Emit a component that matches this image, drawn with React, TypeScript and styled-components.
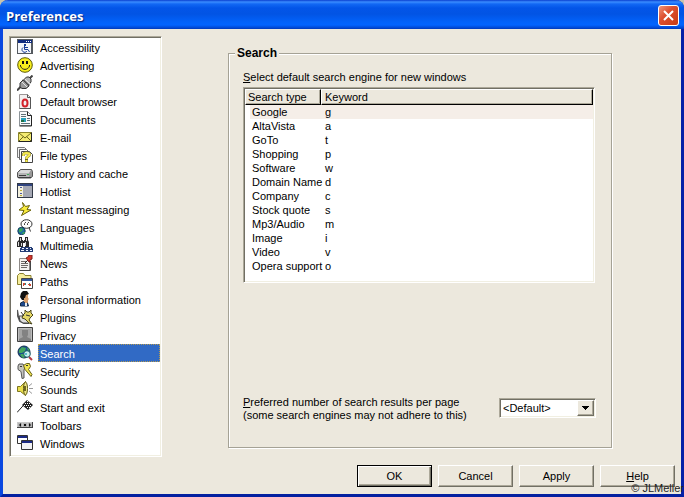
import React, { useState } from "react";
import styled, { createGlobalStyle, css } from "styled-components";

const surface = "#ece8dd";
const shade = "#aca899";
const dark = "#716f64";

const GlobalStyle = createGlobalStyle`
  *, *::before, *::after { box-sizing: border-box; }
  body {
    margin: 0;
    background: #c9c4ae;
    color: #000;
    font: 11px/14px "Liberation Sans", Arial, sans-serif;
  }
  button, select { font: inherit; color: inherit; }
`;

const Dialog = styled.div`
  position: relative;
  display: flex;
  flex-direction: column;
  min-height: 100vh;
  border: solid;
  border-width: 0 3px 3px;
  border-color: #0a2ec4 #0520a8 #0420a0 #0a48e0;
  border-radius: 8px 8px 0 0;
  background: ${surface};
`;

const TitleBar = styled.header`
  display: flex;
  align-items: center;
  justify-content: space-between;
  height: 29px;
  margin: 0 -3px;
  padding: 2px 5px 0 6px;
  border-radius: 8px 8px 0 0;
  background: linear-gradient(
    #0a3fd0 0px, #3a8cff 2px, #1268f4 4px, #0355e8 8px, #0254e4 14px,
    #0262fa 22px, #0264ff 25px, #0146d0 28px, #0038b8 29px
  );
`;

const Title = styled.h1`
  margin: 0;
  color: #fff;
  font: bold 13px/16px "Open Sans", "Noto Sans", sans-serif;
  text-shadow: 1px 1px 1px #06257f;
`;

const CloseButton = styled.button`
  display: grid;
  place-items: center;
  width: 21px;
  height: 21px;
  padding: 0;
  border: 1px solid #fff;
  border-radius: 3px;
  background: linear-gradient(135deg, #f0957a, #dd5030 40%, #c83a12);
`;

const Body = styled.div`
  display: grid;
  grid-template-columns: 153px minmax(0, 1fr);
  gap: 66px;
  flex: 1;
  padding: 7px 69px 8px 6px;
`;

const sunken = css`
  border: 1px solid;
  border-color: ${shade} #fff #fff ${shade};
  background: #fff;
  box-shadow: inset 1px 1px ${dark}, inset -1px -1px #f1efe2;
`;

const CategoryList = styled.ul`
  ${sunken}
  align-self: stretch;
  margin: 0;
  padding: 1px;
  list-style: none;
`;

const Category = styled.button<{ $active: boolean }>`
  display: grid;
  grid-template-columns: 16px minmax(0, 1fr);
  align-items: center;
  gap: 5px;
  width: 100%;
  height: 18px;
  padding: 0 0 0 6px;
  border: 0;
  background: none;
  text-align: left;
  white-space: nowrap;

  span {
    height: 18px;
    padding: 2px 0 0 2px;
    line-height: 16px;
    ${({ $active }) => $active && css`
      background: #316ac5;
      color: #fff;
      outline: 1px dotted #b59a50;
      outline-offset: -1px;
    `}
  }
`;

const Icon = styled.svg`
  display: block;
  width: 16px;
  height: 16px;
`;

const Group = styled.fieldset`
  display: flex;
  flex-direction: column;
  min-width: 0;
  margin: 10px 0 9px;
  padding: 10px 16px 25px 14px;
  border: 1px solid #a5a295;
  box-shadow: 1px 1px #fff, inset 1px 1px #fff;
`;

const Legend = styled.legend`
  margin-left: -8px;
  padding: 0 2px;
  background: ${surface};
  font: bold 12px/14px "Liberation Sans", Arial, sans-serif;
`;

const Caption = styled.div`
  margin-bottom: 3px;
  white-space: nowrap;
`;

const EngineBox = styled.div`
  ${sunken}
  height: 196px;
  padding: 1px;
`;

const EngineTable = styled.table`
  width: 100%;
  table-layout: fixed;
  border-collapse: separate;
  border-spacing: 0;
  white-space: nowrap;

  thead th {
    height: 16px;
    padding: 0 3px;
    border: 1px solid;
    border-color: #fff #000 #000 #fff;
    background: ${surface};
    box-shadow: inset -1px -1px ${shade};
    font-weight: normal;
    line-height: 14px;
    text-align: left;
  }
  thead th:first-child { width: 76px; padding-left: 2px; }
`;

const EngineRow = styled.tr<{ $selected: boolean }>`
  td {
    height: 14px;
    padding: 0 4px;
    line-height: 14px;
    ${({ $selected }) => $selected && css`background: #f5eee8;`}
  }
  td:first-child {
    padding: 0 0 0 7px;
    ${({ $selected }) => $selected && css`background: linear-gradient(90deg, #fff 5px, #f5eee8 5px);`}
  }
`;

const ResultsRow = styled.div`
  display: flex;
  align-items: flex-start;
  justify-content: space-between;
  margin: auto -1px 0 0;
`;

const ResultsLabel = styled.label`
  line-height: 13px;
  white-space: nowrap;
`;

const SelectBox = styled.div`
  ${sunken}
  display: grid;
  grid-template-columns: minmax(0, 1fr) 17px;
  width: 97px;
  height: 20px;
  margin-top: 2px;
  padding: 1px;

  select {
    grid-area: 1 / 1 / 2 / 3;
    appearance: none;
    width: 100%;
    height: 16px;
    padding: 0 18px 0 2px;
    border: 0;
    background: transparent;
    line-height: 16px;
  }
`;

const Arrow = styled.span`
  display: grid;
  place-items: center;
  grid-area: 1 / 2;
  border: 1px solid;
  border-color: #fff ${dark} ${dark} #fff;
  background: ${surface};
  box-shadow: inset -1px -1px ${shade};
  pointer-events: none;
`;

const Footer = styled.footer`
  display: flex;
  justify-content: flex-end;
  gap: 6px;
  padding: 0 6px 7px;
`;

const PushButton = styled.button<{ $primary?: boolean }>`
  width: 75px;
  height: 22px;
  padding: 0;
  border: 1px solid;
  border-color: ${({ $primary }) => ($primary ? "#000" : `#fff ${dark} ${dark} #fff`)};
  background: ${surface};
  box-shadow: ${({ $primary }) =>
    $primary
      ? `inset 1px 1px #fff, inset -1px -1px ${dark}, inset -2px -2px ${shade}`
      : `inset -1px -1px ${shade}`};
`;

const Credit = styled.small`
  position: absolute;
  right: -3px;
  bottom: -1px;
  color: #222;
  font-size: 11px;
  line-height: 14px;
`;

const icons: Record<string, React.ReactNode> = {
  Accessibility: (
    <>
      <path d="M0 0h16v15H0z" fill="#555a60" />
      <path d="M1 1h14v3H1z" fill="#102c80" />
      <path d="M9 2h1v1H9zM11 2h1v1h-1zM13 2h1v1h-1z" fill="#fff" />
      <path d="M1 4h13v10H1z" fill="#f4f6fa" />
      <path d="M7 5h2v2H7z" fill="#163b94" />
      <path d="M7.5 7v3.5h3.5l1.5 2.500M8 8.500h3M6 8.500a2.700 2.700 0 1 0 4 3.500" fill="none" stroke="#163b94" />
    </>
  ),
  Advertising: (
    <>
      <circle cx="8" cy="8" r="7.3" fill="#f7ee1c" stroke="#5d5a08" />
      <path d="M5 4h2v3H5zM9 4h2v3H9z" fill="#111" />
      <path d="M3.500 9c1.500 4.500 7.500 4.500 9 0M3 9l1-1M12 8l1 1" fill="none" stroke="#222" />
    </>
  ),
  Connections: (
    <>
      <path d="M0 15.500l4-4M12 4l3.500-3.500" stroke="#444" strokeWidth="2" />
      <path d="M3 8l3-3 6 6-3 2.500H5L3 12z" fill="#9a9a9a" stroke="#333" />
      <path d="M6.500 5l3-3H12l2 2v3l-2.500 3z" fill="#b5b5b5" stroke="#333" />
      <path d="M5 7l5 5M8 4l5 5" stroke="#e4e4e4" />
      <path d="M6 4.500l6.500 6.500" stroke="#555" />
    </>
  ),
  "Default browser": (
    <>
      <path d="M2.500 1.500h8l3 3v11h-11z" fill="#f3f0f0" stroke="#9b9696" />
      <path d="M10.500 1.500v3h3v11h-11" fill="none" stroke="#555" />
      <ellipse cx="8" cy="10" rx="2.500" ry="3.500" fill="none" stroke="#d3222a" strokeWidth="2" />
    </>
  ),
  Documents: (
    <>
      <path d="M2.500.5h8l4 4v10h-12z" fill="#f7f9fa" stroke="#8d9498" />
      <path d="M10.500.5v4h4v10.500H2.500" fill="none" stroke="#222" />
      <path d="M4 3h5v1H4zM4 5h5v1H4zM10 7h3v1h-3zM10 9h3v1h-3zM4 12h9v1H4z" fill="#5e7078" />
      <path d="M4 7h5v4H4z" fill="#25a0bb" />
      <path d="M4 9h3v2H4z" fill="#1f7148" />
    </>
  ),
  "E-mail": (
    <>
      <path d="M1.500 3.500h13v9h-13z" fill="#f4ec72" stroke="#8a842a" />
      <path d="M1.500 12.500h13v-9" fill="none" stroke="#222" />
      <path d="M2 4l6 5 6-5M2 12l4.500-4.500M14 12L9.500 7.500" fill="none" stroke="#6d681c" />
    </>
  ),
  "File types": (
    <>
      <path d="M.5.500h7l2 2v8h-9z" fill="#f2f2f2" stroke="#777" />
      <path d="M2.500 2.500h7l2 2v8h-9z" fill="#fafafa" stroke="#666" />
      <path d="M4.500 4.500h8l3 3v8h-11z" fill="#fff" stroke="#444" />
      <path d="M6.500 9V7.500c0-2 6-2 6 0 0 2-3 1.500-3 4V15" fill="none" stroke="#8d8528" strokeWidth="3" />
      <path d="M6.500 9V7.500c0-2 6-2 6 0 0 2-3 1.500-3 4V15" fill="none" stroke="#f5ea50" strokeWidth="2" />
      <path d="M8 12h3v1H8z" fill="#6b651c" />
    </>
  ),
  "History and cache": (
    <>
      <path d="M.5 7.500l3-3h11l1 2v5l-2 1.500H1.500l-1-1z" fill="#999" stroke="#555" />
      <path d="M1 8l3-3h10l-2 3z" fill="#dadada" />
      <path d="M1 8h11v4H1z" fill="#b5b5b5" />
      <path d="M2 10.500h7M1 12.500h13" stroke="#3c3c3c" />
      <path d="M10 9h2v1h-2z" fill="#43b05a" />
    </>
  ),
  Hotlist: (
    <>
      <path d="M0 0h16v15H0z" fill="#333a48" />
      <path d="M1 1h14v2H1z" fill="#304580" />
      <path d="M1 3h5v11H1z" fill="#f3f0dc" />
      <path d="M6 3h9v11H6z" fill="#a5a8b4" />
      <path d="M3 4h2v1H3zM3 10h2v1H3z" fill="#4b57a0" />
      <path d="M3 7h2v1H3zM3 12h2v1H3z" fill="#b8a533" />
    </>
  ),
  "Instant messaging": (
    <path d="M5.500 1.500l3 4 4-1-2.500 4 4 .5-9.500 5.500 2.500-5-5-.5 4.500-3.500z" fill="#f9ec3d" stroke="#6a620c" />
  ),
  Languages: (
    <>
      <ellipse cx="9.500" cy="5" rx="5.500" ry="4.300" fill="#fff" stroke="#333" />
      <path d="M12 8.500l1.500 4M6 8l-1 2" stroke="#333" />
      <path d="M7.500 6V4.500L9 3M10.500 6V4.500L12 3" fill="none" stroke="#444" />
      <circle cx="4.500" cy="12" r="3.700" fill="#1d70a4" stroke="#173e5a" />
      <path d="M2 10l3-1 1 2-2 2H2zM6 13h2l-1 2H5z" fill="#37a35b" />
    </>
  ),
  Multimedia: (
    <>
      <path d="M2 0h3v3h1v1h1V3h1V0h3v3l1 2v5H8V6H6v4H0V5l2-2z" fill="#292929" />
      <path d="M1 5h1v4H1zM3 1h1v3H3zM4 6h1v3H4zM8 5h1v4H8zM9 1h1v3H9z" fill="#d8d8d8" />
      <path d="M4 10h11v1h1v4H3v-4h1z" fill="#233d76" />
      <path d="M5 11h2v1H5zM9 11h2v1H9zM13 11h1v1h-1zM4 13h3v1H4zM9 13h2v1H9zM13 13h2v1h-2z" fill="#eef3ff" />
    </>
  ),
  News: (
    <>
      <path d="M2.500 3.500h10v12h-10z" fill="#f5f3f0" stroke="#8e8a87" />
      <path d="M13.500 6v9.500h-11" fill="none" stroke="#444" />
      <path d="M4 6h5v1H4zM4 8h7v1H4zM4 10h7v1H4zM4 12h6v1H4z" fill="#6d6865" />
      <path d="M8 8l3-3" stroke="#222" />
      <path d="M9 3l2-1 1-2h3v4l-2 1v2h-1z" fill="#d6372b" stroke="#7a201c" />
    </>
  ),
  Paths: (
    <>
      <path d="M.5 11.500v-9l2-2h4l1.500 2h6v9z" fill="#f6ee9c" stroke="#8c8230" />
      <path d="M4.500 5.500h11v10h-11z" fill="#fff" stroke="#444" />
      <path d="M5 6h10v2H5z" fill="#33579f" />
      <path d="M6 10h2v1h1v1H7v1H6zM11 11h3v2h-2v-1h-1z" fill="#ca4c36" />
      <path d="M8 10h1v2H8zM12 10h1v1h-1z" fill="#2e8b94" />
    </>
  ),
  "Personal information": (
    <>
      <path d="M5 3h6v4l1 1-1 1v3H7z" fill="#d9a06b" />
      <path d="M4 2l2-2h4l2 3-3 1-1 3H7v2H5L3 6z" fill="#111" />
      <path d="M3.500 15v-3l3-1.500 2 2.500 2-1 1 3z" fill="#1e4a8e" stroke="#132948" />
      <path d="M8 12h2v3H8z" fill="#e4ecf5" />
    </>
  ),
  Plugins: (
    <>
      <path d="M0 1l1 6 2 5 4 2h5" fill="none" stroke="#555" strokeWidth="2" />
      <path d="M2 7h5l4 3 1 4H6l-3-2z" fill="#ddd" stroke="#444" />
      <path d="M6 6l2-2V1l2 2h2l2-2v3l2 2-3 3-1 2 3 4-3-1-4-4-3-1z" fill="#e5d866" stroke="#4a461c" />
      <path d="M4 3l3 4M9 6l4 1" stroke="#333" />
    </>
  ),
  Privacy: (
    <>
      <path d="M.5.500h15v14H.5z" fill="#a4a4a4" stroke="#3f3f3f" />
      <path d="M1.500 1.500h13v12h-13z" fill="none" stroke="#bdbdbd" />
      <path d="M5 3h6v5l-1 2 4 2v2H2v-2l4-2-1-2z" fill="#828282" />
    </>
  ),
  Search: (
    <>
      <circle cx="7" cy="7" r="6" fill="#1b4e91" stroke="#12304d" />
      <path d="M2 5l3-3 4 1-1 3-3 2H2zM4 9h3l1 3-2 1-3-3zM10 2l3 3-2 1z" fill="#43a65e" />
      <circle cx="10" cy="9" r="3.300" fill="#c9f1ef" stroke="#1c5963" />
      <path d="M8 8h2v2H8z" fill="#5cc1c9" />
      <path d="M12 12l3 3" stroke="#b63942" strokeWidth="2" />
    </>
  ),
  Security: (
    <>
      <path d="M2 1h4l2 3-1 3v8l-2 .5-1-7-3-2V3z" fill="#c3c3bd" stroke="#555" />
      <path d="M6.500 2.500l3-2h3l1 3-2 3 3.500 5-1 2-6-7z" fill="#f1e650" stroke="#67601a" />
      <path d="M9 2h2v1H9zM3 3h2v1H3z" fill="#333" />
    </>
  ),
  Sounds: (
    <>
      <path d="M.5 5.500h3l5-5v14l-5-4h-3z" fill="#eadf4c" stroke="#7d7520" />
      <ellipse cx="8.500" cy="7.500" rx="2" ry="6.500" fill="#f0e883" stroke="#625b18" />
      <path d="M7 5h2v5H7z" fill="#6e671f" />
      <path d="M12 5l3-2.500M12 7.500h4M12 10l3 2.500" stroke="#9a9a9a" />
    </>
  ),
  "Start and exit": (
    <>
      <path d="M0 13.500L9 3.500" stroke="#222" />
      <path d="M5 6l5-5 6 5-5 5z" fill="#1f1f1f" />
      <path d="M10 2h1v1h-1zM8 4h1v1H8zM10 4h1v1h-1zM12 4h1v1h-1zM7 6h1v1H7zM9 6h1v1H9zM11 6h1v1h-1zM13 6h1v1h-1zM10 8h1v1h-1zM12 8h1v1h-1z" fill="#fff" />
    </>
  ),
  Toolbars: (
    <>
      <path d="M0 5h16v6H0z" fill="#444" />
      <path d="M0 5h15v1H0zM0 6h1v4H0zM5 6h1v4H5zM10 6h1v4h-1z" fill="#c9c9c9" />
      <path d="M1 6h4v4H1zM6 6h4v4H6zM11 6h4v4h-4z" fill="#b4b4b4" />
      <path d="M2 8l2-2v4zM7 7h2v2H7zM14 8l-2-2v4z" fill="#111" />
    </>
  ),
  Windows: (
    <>
      <path d="M.5.500h10v8H.5z" fill="#fff" stroke="#333" />
      <path d="M1 1h9v2H1z" fill="#1c2b85" />
      <path d="M4.500 5.500h11v9h-11z" fill="#f2f2f4" stroke="#333" />
      <path d="M5 6h10v2H5z" fill="#1c2b85" />
    </>
  ),
};

const engines: [string, string][] = [
  ["Google", "g"],
  ["AltaVista", "a"],
  ["GoTo", "t"],
  ["Shopping", "p"],
  ["Software", "w"],
  ["Domain Name", "d"],
  ["Company", "c"],
  ["Stock quote", "s"],
  ["Mp3/Audio", "m"],
  ["Image", "i"],
  ["Video", "v"],
  ["Opera support", "o"],
];

export default function App() {
  const [category, setCategory] = useState("Search");
  const [engine, setEngine] = useState("Google");

  return (
    <>
      <GlobalStyle />
      <Dialog role="dialog" aria-labelledby="title">
        <TitleBar>
          <Title id="title">Preferences</Title>
          <CloseButton type="button" aria-label="Close">
            <svg width="13" height="13" viewBox="0 0 13 13">
              <path d="M2 2l9 9M11 2l-9 9" stroke="#fff" strokeWidth="2" />
            </svg>
          </CloseButton>
        </TitleBar>
        <Body>
          <CategoryList>
            {Object.keys(icons).map((name) => (
              <li key={name}>
                <Category type="button" $active={name === category} onClick={() => setCategory(name)}>
                  <Icon viewBox="0 0 16 16" aria-hidden="true">{icons[name]}</Icon>
                  <span>{name}</span>
                </Category>
              </li>
            ))}
          </CategoryList>
          <Group>
            <Legend>Search</Legend>
            <Caption id="engines"><u>S</u>elect default search engine for new windows</Caption>
            <EngineBox>
              <EngineTable aria-labelledby="engines">
                <thead>
                  <tr>
                    <th>Search type</th>
                    <th>Keyword</th>
                  </tr>
                </thead>
                <tbody>
                  {engines.map(([name, key]) => (
                    <EngineRow key={key} $selected={name === engine} onClick={() => setEngine(name)}>
                      <td>{name}</td>
                      <td>{key}</td>
                    </EngineRow>
                  ))}
                </tbody>
              </EngineTable>
            </EngineBox>
            <ResultsRow>
              <ResultsLabel htmlFor="results">
                <u>P</u>referred number of search results per page
                <br />
                (some search engines may not adhere to this)
              </ResultsLabel>
              <SelectBox>
                <select id="results" defaultValue="default">
                  <option value="default">&lt;Default&gt;</option>
                  <option value="10">10</option>
                  <option value="25">25</option>
                  <option value="50">50</option>
                </select>
                <Arrow>
                  <svg width="7" height="4" viewBox="0 0 7 4" shapeRendering="crispEdges">
                    <path d="M0 0h7v1H0zM1 1h5v1H1zM2 2h3v1H2zM3 3h1v1H3z" />
                  </svg>
                </Arrow>
              </SelectBox>
            </ResultsRow>
          </Group>
        </Body>
        <Footer>
          <PushButton type="button" $primary>OK</PushButton>
          <PushButton type="button">Cancel</PushButton>
          <PushButton type="button">Apply</PushButton>
          <PushButton type="button"><u>H</u>elp</PushButton>
        </Footer>
        <Credit>© JLMeller</Credit>
      </Dialog>
    </>
  );
}
